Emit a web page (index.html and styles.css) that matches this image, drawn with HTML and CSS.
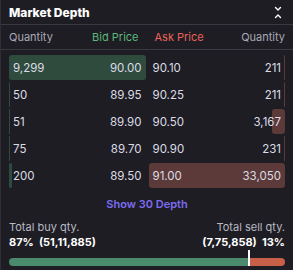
FILE: index.html
```html
<!DOCTYPE html>
<html lang="en">
<head>
    <meta charset="UTF-8">
    <meta name="viewport" content="width=device-width, initial-scale=1.0">
    <title>Market Depth</title>
    <link rel="stylesheet" href="styles.css">
</head>
<body>
    <div class="panel">
        <div class="head">
            <h1>Market Depth</h1>
            <svg class="collapse" width="8" height="13" viewBox="0 0 8 13">
                <path d="M1.5 1.5l2.5 2.5 2.5-2.5M1.5 11.5l2.5-2.5 2.5 2.5" fill="none" stroke="#fff" stroke-width="1.4" stroke-linecap="round" stroke-linejoin="round"/>
            </svg>
        </div>
        <div class="cols">
            <div class="side">
                <span>Quantity</span>
                <span class="bid">Bid Price</span>
            </div>
            <div class="side ask-side">
                <span class="ask">Ask Price</span>
                <span>Quantity</span>
            </div>
        </div>
        <div class="book">
            <div class="row">
                <div class="cell"><i class="bar bid-bar" style="width: 100%"></i><span>9,299</span><span>90.00</span></div>
                <div class="cell"><i class="bar ask-bar" style="width: 0.64%"></i><span>90.10</span><span>211</span></div>
            </div>
            <div class="row">
                <div class="cell"><i class="bar bid-bar" style="width: 0.54%"></i><span>50</span><span>89.95</span></div>
                <div class="cell"><i class="bar ask-bar" style="width: 0.64%"></i><span>90.25</span><span>211</span></div>
            </div>
            <div class="row">
                <div class="cell"><i class="bar bid-bar" style="width: 0.55%"></i><span>51</span><span>89.90</span></div>
                <div class="cell"><i class="bar ask-bar" style="width: 9.58%"></i><span>90.50</span><span>3,167</span></div>
            </div>
            <div class="row">
                <div class="cell"><i class="bar bid-bar" style="width: 0.81%"></i><span>75</span><span>89.70</span></div>
                <div class="cell"><i class="bar ask-bar" style="width: 0.7%"></i><span>90.90</span><span>231</span></div>
            </div>
            <div class="row">
                <div class="cell"><i class="bar bid-bar" style="width: 2.15%"></i><span>200</span><span>89.50</span></div>
                <div class="cell"><i class="bar ask-bar" style="width: 100%"></i><span>91.00</span><span>33,050</span></div>
            </div>
        </div>
        <div class="more">Show 30 Depth</div>
        <div class="totals">
            <div>
                <p class="label">Total buy qty.</p>
                <p class="value">87%&nbsp; (51,11,885)</p>
            </div>
            <div class="right">
                <p class="label">Total sell qty.</p>
                <p class="value">(7,75,858)&nbsp; 13%</p>
            </div>
        </div>
        <div class="meter">
            <div class="buy" style="width: 87%"></div>
            <div class="sell"></div>
            <i class="mark" style="left: 87%"></i>
        </div>
    </div>
</body>
</html>
```

FILE: styles.css
```css
body {
    margin: 0;
    background-color: #1e1d24;
    font-family: Inter, "Noto Sans", sans-serif;
    color: #dcdce4;
}

.panel {
    height: 270px;
    border-left: 1px solid #2f2e36;
    box-sizing: border-box;
}

.head {
    height: 24px;
    display: flex;
    align-items: center;
    justify-content: space-between;
    padding: 0 11px 0 8px;
    border-bottom: 1px solid #3a3941;
}

.head h1 {
    margin: 0;
    font-size: 12px;
    font-weight: 800;
    color: #fff;
}

.cols {
    height: 24px;
    display: grid;
    grid-template-columns: 1fr 1fr;
    column-gap: 3px;
    padding: 0 8px;
    border-bottom: 1px solid #3a3941;
    font-size: 11px;
    color: #a9a9b5;
}

.side {
    display: flex;
    align-items: center;
    justify-content: space-between;
    padding-right: 7px;
}

.ask-side {
    padding: 0 0 0 6px;
}

.bid {
    color: #5cb879;
}

.ask {
    color: #e9645a;
}

.book {
    padding: 5px 8px 0;
    display: flex;
    flex-direction: column;
    gap: 2px;
}

.row {
    display: grid;
    grid-template-columns: 1fr 1fr;
    column-gap: 3px;
}

.cell {
    position: relative;
    height: 25px;
    display: flex;
    align-items: center;
    justify-content: space-between;
    padding: 0 4px;
    font-size: 11.5px;
}

.cell span {
    position: relative;
}

.bar {
    position: absolute;
    top: 0;
    bottom: 0;
    min-width: 1px;
    border-radius: 3px;
}

.bid-bar {
    left: 0;
    background-color: #2e4b3e;
}

.ask-bar {
    right: 0;
    background-color: #5b3a39;
}

.more {
    text-align: center;
    margin-top: 9px;
    font-size: 11px;
    font-weight: 600;
    color: #7b6cf2;
}

.totals {
    display: flex;
    justify-content: space-between;
    padding: 0 8px;
    margin-top: 9px;
}

.totals p {
    margin: 0;
}

.right {
    text-align: right;
}

.label {
    font-size: 11px;
    color: #b9b9c3;
    line-height: 15px;
}

.value {
    font-size: 11px;
    font-weight: 700;
    color: #fff;
    line-height: 15px;
}

.meter {
    position: relative;
    display: flex;
    height: 8px;
    margin: 8px 8px 0;
    border-radius: 4px;
}

.buy {
    background-color: #4a8a6d;
    border-radius: 4px 0 0 4px;
}

.sell {
    flex: 1;
    background-color: #c85f48;
    border-radius: 0 4px 4px 0;
}

.mark {
    position: absolute;
    bottom: 0;
    width: 2px;
    height: 16px;
    margin-left: -1px;
    background-color: #fff;
}
```
